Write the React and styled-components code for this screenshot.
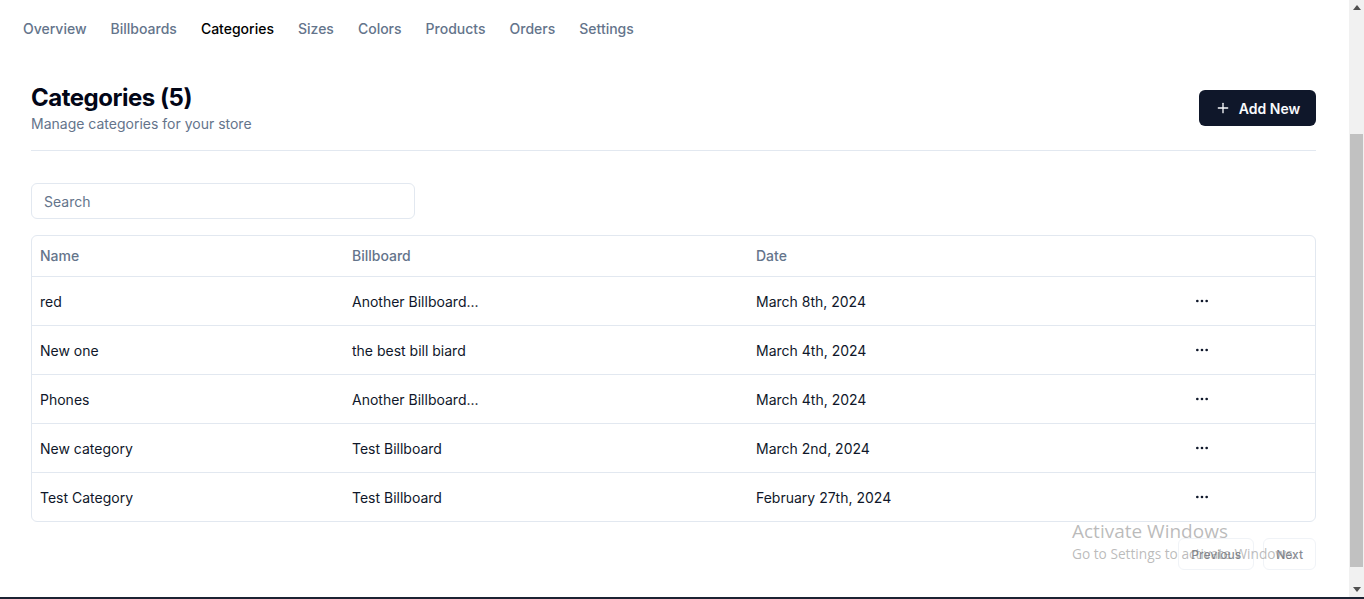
import React from "react";
import styled, { createGlobalStyle } from "styled-components";
import { Plus, MoreHorizontal } from "lucide-react";

const GlobalStyle = createGlobalStyle`
  * { box-sizing: border-box; }
  html, body { margin: 0; padding: 0; background: #ffffff; overflow: hidden; }
  body { font-family: "Inter", "Liberation Sans", sans-serif; color: #0f172a; }
`;

const navItems = ["Overview", "Billboards", "Categories", "Sizes", "Colors", "Products", "Orders", "Settings"];

const categories = [
  { name: "red", billboard: "Another Billboard...", date: "March 8th, 2024" },
  { name: "New one", billboard: "the best bill biard", date: "March 4th, 2024" },
  { name: "Phones", billboard: "Another Billboard...", date: "March 4th, 2024" },
  { name: "New category", billboard: "Test Billboard", date: "March 2nd, 2024" },
  { name: "Test Category", billboard: "Test Billboard", date: "February 27th, 2024" },
];

const App = () => {
  return (
    <Screen>
      <GlobalStyle />
      <Viewport>
        <Page>
          <Header>
            {navItems.map((item) => (
              <NavLink key={item} active={item === "Categories"}>
                {item}
              </NavLink>
            ))}
          </Header>
          <Main>
            <TopRow>
              <div>
                <Title>Categories (5)</Title>
                <Subtitle>Manage categories for your store</Subtitle>
              </div>
              <PrimaryButton>
                <Plus size={16} strokeWidth={2} />
                Add New
              </PrimaryButton>
            </TopRow>
            <Separator />
            <SearchInput placeholder="Search" />
            <TableWrap>
              <HeadRow>
                <HeadCell>Name</HeadCell>
                <HeadCell>Billboard</HeadCell>
                <HeadCell>Date</HeadCell>
                <HeadCell />
              </HeadRow>
              {categories.map((c, i) => (
                <BodyRow key={c.name} last={i === categories.length - 1}>
                  <Cell>{c.name}</Cell>
                  <Cell>{c.billboard}</Cell>
                  <Cell>{c.date}</Cell>
                  <Cell>
                    <IconButton>
                      <MoreHorizontal size={16} strokeWidth={2} />
                    </IconButton>
                  </Cell>
                </BodyRow>
              ))}
            </TableWrap>
            <Pagination>
              <OutlineButton disabled>Previous</OutlineButton>
              <OutlineButton disabled>Next</OutlineButton>
            </Pagination>
          </Main>
          <Watermark>
            <WatermarkTitle>Activate Windows</WatermarkTitle>
            <WatermarkText>Go to Settings to activate Windows.</WatermarkText>
          </Watermark>
        </Page>
        <Scrollbar>
          <ScrollArrow>
            <svg width="8" height="5" viewBox="0 0 8 5"><path d="M0 5 L4 0 L8 5 Z" fill="#505050" /></svg>
          </ScrollArrow>
          <Track>
            <Thumb />
          </Track>
          <ScrollArrow>
            <svg width="8" height="5" viewBox="0 0 8 5"><path d="M0 0 L8 0 L4 5 Z" fill="#505050" /></svg>
          </ScrollArrow>
        </Scrollbar>
      </Viewport>
      <TaskbarEdge />
    </Screen>
  );
};

const Screen = styled.div`
  width: 1364px;
  height: 599px;
  display: flex;
  flex-direction: column;
`;

const Viewport = styled.div`
  flex: 1;
  display: flex;
  min-height: 0;
`;

const Page = styled.div`
  flex: 1;
  position: relative;
  overflow: hidden;
`;

const Header = styled.nav`
  height: 56px;
  display: flex;
  align-items: center;
  gap: 24px;
  padding-left: 23px;
`;

const NavLink = styled.a`
  font-size: 14px;
  font-weight: 500;
  color: ${(p) => (p.active ? "#000000" : "#64748b")};
  cursor: pointer;
`;

const Main = styled.main`
  padding: 26px 33px 0 31px;
  display: flex;
  flex-direction: column;
`;

const TopRow = styled.div`
  display: flex;
  align-items: center;
  justify-content: space-between;
`;

const Title = styled.h2`
  margin: 0;
  font-size: 24px;
  line-height: 32px;
  font-weight: 700;
  letter-spacing: -0.02em;
  color: #020617;
`;

const Subtitle = styled.p`
  margin: 0;
  font-size: 14px;
  line-height: 20px;
  color: #64748b;
`;

const PrimaryButton = styled.button`
  height: 36px;
  width: 117px;
  display: flex;
  align-items: center;
  justify-content: center;
  gap: 8px;
  border: none;
  border-radius: 6px;
  background: #0f172a;
  color: #f8fafc;
  font-family: inherit;
  font-size: 14px;
  font-weight: 600;
  cursor: pointer;
`;

const Separator = styled.div`
  height: 1px;
  background: #e2e8f0;
  margin-top: 16px;
`;

const SearchInput = styled.input`
  margin-top: 32px;
  width: 384px;
  height: 36px;
  border: 1px solid #e2e8f0;
  border-radius: 6px;
  padding: 0 12px;
  font-family: inherit;
  font-size: 14px;
  color: #0f172a;
  outline: none;
  &::placeholder {
    color: #64748b;
  }
`;

const TableWrap = styled.div`
  margin-top: 16px;
  border: 1px solid #e2e8f0;
  border-radius: 6px;
`;

const grid = `
  display: grid;
  grid-template-columns: 312px 404px 430px 1fr;
`;

const HeadRow = styled.div`
  ${grid}
  height: 41px;
  border-bottom: 1px solid #e2e8f0;
`;

const BodyRow = styled.div`
  ${grid}
  height: ${(p) => (p.last ? "48px" : "49px")};
  border-bottom: ${(p) => (p.last ? "none" : "1px solid #e2e8f0")};
`;

const HeadCell = styled.div`
  display: flex;
  align-items: center;
  padding-left: 8px;
  padding-bottom: 1px;
  font-size: 14px;
  font-weight: 500;
  color: #64748b;
`;

const Cell = styled.div`
  display: flex;
  align-items: center;
  padding-left: 8px;
  font-size: 14px;
  color: #0f172a;
`;

const IconButton = styled.button`
  width: 32px;
  height: 32px;
  display: flex;
  align-items: center;
  justify-content: center;
  background: transparent;
  border: none;
  padding: 0;
  color: #0f172a;
  cursor: pointer;
`;

const Pagination = styled.div`
  display: flex;
  justify-content: flex-end;
  gap: 9px;
  padding-top: 16px;
`;

const OutlineButton = styled.button`
  height: 32px;
  padding: 0 12px;
  border: 1px solid #e2e8f0;
  border-radius: 6px;
  background: #ffffff;
  font-family: inherit;
  font-size: 12px;
  font-weight: 500;
  color: #0f172a;
  &:disabled {
    opacity: 0.5;
  }
`;

const Watermark = styled.div`
  position: absolute;
  left: 1072px;
  top: 518px;
  font-family: "Open Sans", "Noto Sans", sans-serif;
  color: rgba(120, 120, 120, 0.5);
  pointer-events: none;
`;

const WatermarkTitle = styled.div`
  font-size: 19px;
  line-height: 26px;
`;

const WatermarkText = styled.div`
  font-size: 13.7px;
  line-height: 20px;
`;

const Scrollbar = styled.div`
  width: 15px;
  display: flex;
  flex-direction: column;
  background: #f1f1f1;
`;

const ScrollArrow = styled.div`
  height: 15px;
  display: flex;
  align-items: center;
  justify-content: center;
`;

const Track = styled.div`
  flex: 1;
  display: flex;
  flex-direction: column;
  justify-content: flex-end;
  padding: 0 1px 15px 1px;
`;

const Thumb = styled.div`
  height: 433px;
  background: #c1c1c1;
`;

const TaskbarEdge = styled.div`
  height: 2px;
  background: #1c2333;
`;

export default App;
